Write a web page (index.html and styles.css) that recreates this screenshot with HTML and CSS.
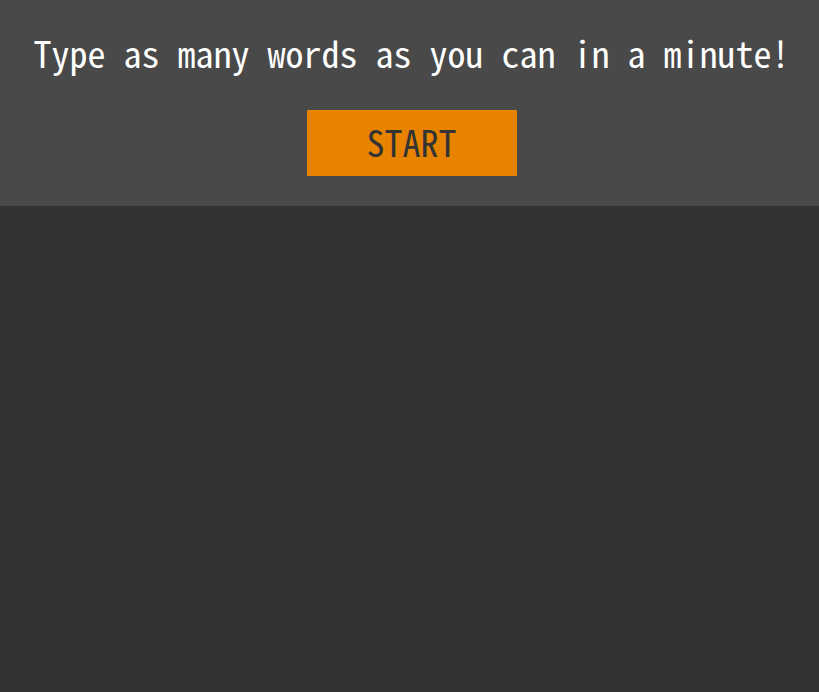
FILE: index.html
```html
<!DOCTYPE html>
<html>
<head>
<meta charset="utf-8">
<link rel="stylesheet" href="styles.css">
</head>
<body>
<header class="top">
  <h1 class="title">Type as many words as you can in a minute!</h1>
  <button class="start">START</button>
</header>
<main class="stage"></main>
</body>
</html>
```

FILE: styles.css
```css
html, body {
  margin: 0;
  padding: 0;
  background: #333333;
  height: 100%;
}
body {
  font-family: "Noto Sans Mono CJK KR", "Noto Sans CJK KR", "DejaVu Sans Mono", monospace;
}
.top {
  background: #494949;
  height: 206px;
  display: flex;
  flex-direction: column;
  align-items: center;
  box-sizing: border-box;
  padding-top: 27px;
  padding-left: 4px;
}
.title {
  margin: 0;
  color: #ffffff;
  font-size: 36px;
  font-weight: normal;
  line-height: 50px;
  white-space: nowrap;
}
.start {
  margin-top: 33px;
  width: 210px;
  height: 66px;
  border: none;
  background: #e88300;
  color: #333333;
  font-family: inherit;
  font-size: 36px;
  padding: 0 0 5px 0;
}
```
